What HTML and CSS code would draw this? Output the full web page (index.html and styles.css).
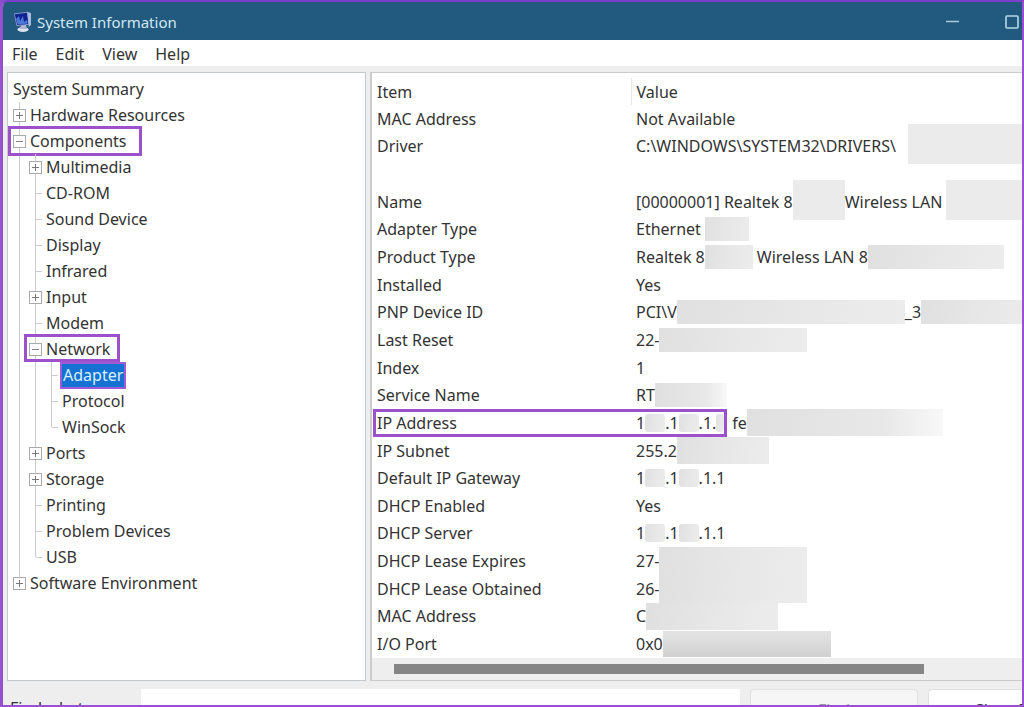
FILE: index.html
```html
<!DOCTYPE html>
<html lang="en">
<head>
<meta charset="utf-8">
<title>System Information</title>
<link rel="stylesheet" href="styles.css">
</head>
<body>
<div class="window">
  <header class="titlebar">
    <svg class="app-icon" viewBox="0 0 20 22" aria-hidden="true">
      <ellipse cx="10" cy="18.500" rx="5.500" ry="2.500" fill="#dfe3ee"/>
      <path d="M8 14h5l1 4H7z" fill="#aab6cf"/>
      <path d="M1 2.500 15 .8l1.500 13L3.500 15z" fill="#8fa3d6"/>
      <path d="M1.800 3.200 14 1.800l1.400 11.300-11.200 1z" fill="#10248e"/>
      <path d="M3 8l3-3 1 5 3-5 1 6 3-2 .6 3.500-9.800.9z" fill="#4d78d8"/>
      <path d="M14.500 1l3.500 1v12l-2.300 2z" fill="#a9bce0"/>
    </svg>
    <h1 class="title">System Information</h1>
    <button class="caption" aria-label="Minimize"><svg width="13" height="13" viewBox="0 0 13 13"><path d="M0 6.500h13" stroke="#a9cbdc" stroke-width="1.500"/></svg></button>
    <button class="caption" aria-label="Maximize"><svg width="14" height="14" viewBox="0 0 14 14"><rect x="1" y="1" width="12" height="12" rx="1" fill="none" stroke="#b4d9e6" stroke-width="1.600"/></svg></button>
  </header>
  <nav class="menubar">
    <button>File</button><button>Edit</button><button>View</button><button>Help</button>
  </nav>
  <main class="panes">
    <section class="tree-pane" aria-label="Categories">
      <div class="root">System Summary</div>
      <ul class="tree">
        <li><div class="node"><i class="box plus"></i>Hardware Resources</div></li>
        <li><div class="node"><i class="box"></i><span>Components</span><b class="mark mark-components"></b></div>
          <ul>
            <li><div class="node"><i class="box plus"></i>Multimedia</div></li>
            <li><div class="node"><i class="stub"></i>CD-ROM</div></li>
            <li><div class="node"><i class="stub"></i>Sound Device</div></li>
            <li><div class="node"><i class="stub"></i>Display</div></li>
            <li><div class="node"><i class="stub"></i>Infrared</div></li>
            <li><div class="node"><i class="box plus"></i>Input</div></li>
            <li><div class="node"><i class="stub"></i>Modem</div></li>
            <li><div class="node"><i class="box"></i><span>Network</span><b class="mark mark-network"></b></div>
              <ul>
                <li><div class="node"><i class="stub"></i><span class="selected">Adapter</span></div></li>
                <li><div class="node"><i class="stub"></i>Protocol</div></li>
                <li><div class="node"><i class="stub"></i>WinSock</div></li>
              </ul>
            </li>
            <li><div class="node"><i class="box plus"></i>Ports</div></li>
            <li><div class="node"><i class="box plus"></i>Storage</div></li>
            <li><div class="node"><i class="stub"></i>Printing</div></li>
            <li><div class="node"><i class="stub"></i>Problem Devices</div></li>
            <li><div class="node"><i class="stub"></i>USB</div></li>
          </ul>
        </li>
        <li><div class="node"><i class="box plus"></i>Software Environment</div></li>
      </ul>
    </section>
    <section class="detail-pane" aria-label="Details">
      <div class="table-wrap">
      <table>
        <thead><tr><th class="item">Item</th><th>Value</th></tr></thead>
        <tbody>
          <tr><td>MAC Address</td><td>Not Available</td></tr>
          <tr><td>Driver</td><td><div class="value">C:\WINDOWS\SYSTEM32\DRIVERS\<i class="hide tall w120 wide-gap"></i></div></td></tr>
          <tr><td></td><td></td></tr>
          <tr><td>Name</td><td><div class="value">[00000001] Realtek 8<i class="hide tall w52"></i>Wireless LAN<i class="hide tall w80 gap"></i></div></td></tr>
          <tr><td>Adapter Type</td><td><div class="value">Ethernet<i class="hide w44 gap"></i></div></td></tr>
          <tr><td>Product Type</td><td><div class="value">Realtek 8<i class="hide w48"></i><span class="gap">Wireless LAN 8</span><i class="hide w136"></i></div></td></tr>
          <tr><td>Installed</td><td>Yes</td></tr>
          <tr><td>PNP Device ID</td><td><div class="value">PCI\V<i class="hide w228"></i>_3<i class="hide w120"></i></div></td></tr>
          <tr><td>Last Reset</td><td><div class="value">22-<i class="hide w148"></i></div></td></tr>
          <tr><td>Index</td><td>1</td></tr>
          <tr><td>Service Name</td><td><div class="value">RT<i class="hide fade w72"></i></div></td></tr>
          <tr><td class="anchor">IP Address<b class="mark mark-ip"></b></td><td><div class="value">1<i class="hide short w20"></i>.1<i class="hide short w20"></i>.1.<i class="hide short w8"></i><span class="after-mark">fe</span><i class="hide fade mid w196"></i></div></td></tr>
          <tr><td>IP Subnet</td><td><div class="value">255.2<i class="hide mid w92"></i></div></td></tr>
          <tr><td>Default IP Gateway</td><td><div class="value">1<i class="hide short w20"></i>.1<i class="hide short w20"></i>.1.1</div></td></tr>
          <tr><td>DHCP Enabled</td><td>Yes</td></tr>
          <tr><td>DHCP Server</td><td><div class="value">1<i class="hide short w20"></i>.1<i class="hide short w20"></i>.1.1</div></td></tr>
          <tr><td>DHCP Lease Expires</td><td><div class="value">27-<i class="hide full w148"></i></div></td></tr>
          <tr><td>DHCP Lease Obtained</td><td><div class="value">26-<i class="hide full w148"></i></div></td></tr>
          <tr><td>MAC Address</td><td><div class="value">C<i class="hide mid w132"></i></div></td></tr>
          <tr><td>I/O Port</td><td><div class="value">0x0<i class="hide dark w168"></i></div></td></tr>
        </tbody>
      </table>
      </div>
      <div class="scrollbar"><div class="thumb"></div></div>
    </section>
  </main>
  <form class="findbar">
    <label for="find">Find what:</label>
    <input id="find" type="text">
    <button type="button" disabled>Find</button>
    <button type="button">Close Find</button>
  </form>
</div>
</body>
</html>
```

FILE: styles.css
```css
* { box-sizing: border-box; }
body {
  margin: 0;
  height: 100vh;
  overflow: hidden;
  background: #8a50c8;
  font-family: "Noto Sans", "Open Sans", sans-serif;
  font-size: 16px;
  line-height: 24px;
  color: #333;
}
button, input { font: inherit; color: inherit; }
ul { list-style: none; margin: 0; padding: 0; }

.window {
  height: 100vh;
  display: flex;
  flex-direction: column;
  background: #eee;
  border-left: 3px solid #8a50c0;
  border-radius: 8px 0 0 0;
  overflow: hidden;
}
/* frame drawn above the content that runs past the window edge */
.window::after {
  content: "";
  position: fixed;
  inset: 0;
  border: 2px solid #9a50d4;
  border-top-color: #7a40cc;
  border-radius: 8px 0 0 0;
  pointer-events: none;
}

.titlebar {
  display: flex;
  align-items: center;
  flex: none;
  height: 40px;
  padding: 3px 0 0 10px;
  margin-right: -18px;
  background: #22597f;
  color: #d2e8f2;
}
.app-icon { width: 20px; height: 22px; margin-right: 4px; }
.title { flex: 1; margin: 0; font-size: 15px; font-weight: 400; }
.caption {
  display: grid;
  place-items: center;
  width: 60px;
  height: 36px;
  padding: 0;
  border: 0;
  background: none;
}

.menubar {
  display: flex;
  flex: none;
  gap: 18px;
  height: 26px;
  padding-left: 9px;
  background: #fff;
}
.menubar button { padding: 0; border: 0; background: none; line-height: 28px; }

.panes {
  display: flex;
  flex: 1;
  gap: 4px;
  min-height: 0;
  padding: 6px 0 0 4px;
}
.tree-pane {
  flex: 0 0 35.3%;
  padding: 3px 5px;
  background: #fff;
  border: 1px solid #c3c8cc;
}
.root, .node { height: 26px; line-height: 26px; white-space: nowrap; }
.node { position: relative; display: flex; align-items: center; }
.tree ul { padding-left: 16px; }
.tree li { position: relative; }
.tree li::before {
  content: "";
  position: absolute;
  left: 6px;
  top: 0;
  bottom: 0;
  border-left: 1px solid #ccc;
}
.tree li:last-child::before { bottom: auto; height: 13px; }
.box, .stub { flex: none; width: 13px; margin-right: 4px; }
.box {
  position: relative;
  height: 13px;
  border: 1px solid #aaa;
  background: linear-gradient(#888, #888) center / 7px 1px no-repeat #fff;
}
.box.plus {
  background:
    linear-gradient(#777, #777) center / 7px 1px no-repeat,
    linear-gradient(#777, #777) center / 1px 7px no-repeat #fff;
}
.stub {
  height: 1px;
  background: linear-gradient(#ccc, #ccc) right / 6px 1px no-repeat;
}
.selected {
  height: 27px;
  margin-left: -2px;
  padding: 0 1px;
  line-height: 23px;
  border: 2px solid #a05ad8;
  background: #1672d2;
  color: #d8f0fc;
}
.mark {
  position: absolute;
  border: 3px solid #9c50cc;
  pointer-events: none;
}
.mark-components { left: -5px; top: -2px; width: 134px; height: 30px; }
.mark-network { left: -5px; top: -2px; width: 96px; height: 28px; }
.mark-ip { left: 1px; top: 0; width: 354px; height: 28px; }

.detail-pane {
  display: flex;
  flex: 1;
  flex-direction: column;
  min-width: 0;
  background: #fff;
  border: 2px solid #ccc;
  border-width: 1px 0 1px 2px;
}
.table-wrap { flex: 1; min-height: 0; padding-top: 5px; overflow: hidden; }
table {
  width: 100%;
  height: 100%;
  table-layout: fixed;
  border-collapse: collapse;
}
th, td {
  height: 27px;
  padding: 0 0 0 5px;
  text-align: left;
  font-weight: 400;
  white-space: nowrap;
}
.item { width: 259px; border-right: 1px solid #e8e8e8; }
.anchor { position: relative; }
.value { display: flex; align-items: center; height: 24px; }
.hide {
  flex: none;
  height: 24px;
  background: linear-gradient(100deg, #e0e0e0, #e8e8e8 60%, #ececec);
}
.tall { height: 40px; margin-top: -4px; background: #ebebeb; }
.mid { height: 27px; }
.full { height: 28px; }
.short { height: 18px; border-radius: 3px; }
.fade { background: linear-gradient(90deg, #e0e0e0, #e8e8e8 70%, #f8f8f8); }
.dark { height: 26px; background: linear-gradient(#e4e4e4, #d0d0d0); }
.w8 { width: 8px; }
.w20 { width: 20px; }
.w44 { width: 44px; }
.w48 { width: 48px; }
.w52 { width: 52px; }
.w72 { width: 72px; }
.w80 { width: 80px; }
.w92 { width: 92px; }
.w120 { width: 120px; }
.w132 { width: 132px; }
.w136 { width: 136px; }
.w148 { width: 148px; }
.w168 { width: 168px; }
.w196 { width: 196px; }
.w228 { width: 228px; }
.gap { margin-left: 4px; }
.wide-gap { margin-left: 12px; }
.after-mark { margin-left: 8px; }

.scrollbar { flex: none; height: 22px; padding: 6px 100px 6px 22px; background: #eee; }
.thumb { height: 10px; background: #858585; }

.findbar {
  display: flex;
  flex: none;
  gap: 10px;
  height: 26px;
  margin-right: -72px;
  padding: 8px 0 0 7px;
}
.findbar label { width: 121px; line-height: 38px; }
.findbar input { flex: 1; min-width: 0; height: 40px; border: 0; background: #fff; }
.findbar button {
  width: 168px;
  height: 40px;
  border: 1px solid #e0e0e0;
  border-radius: 4px;
  background: #fff;
  line-height: 38px;
}
.findbar button:disabled { background: #f6f6f6; color: #999; }
```
